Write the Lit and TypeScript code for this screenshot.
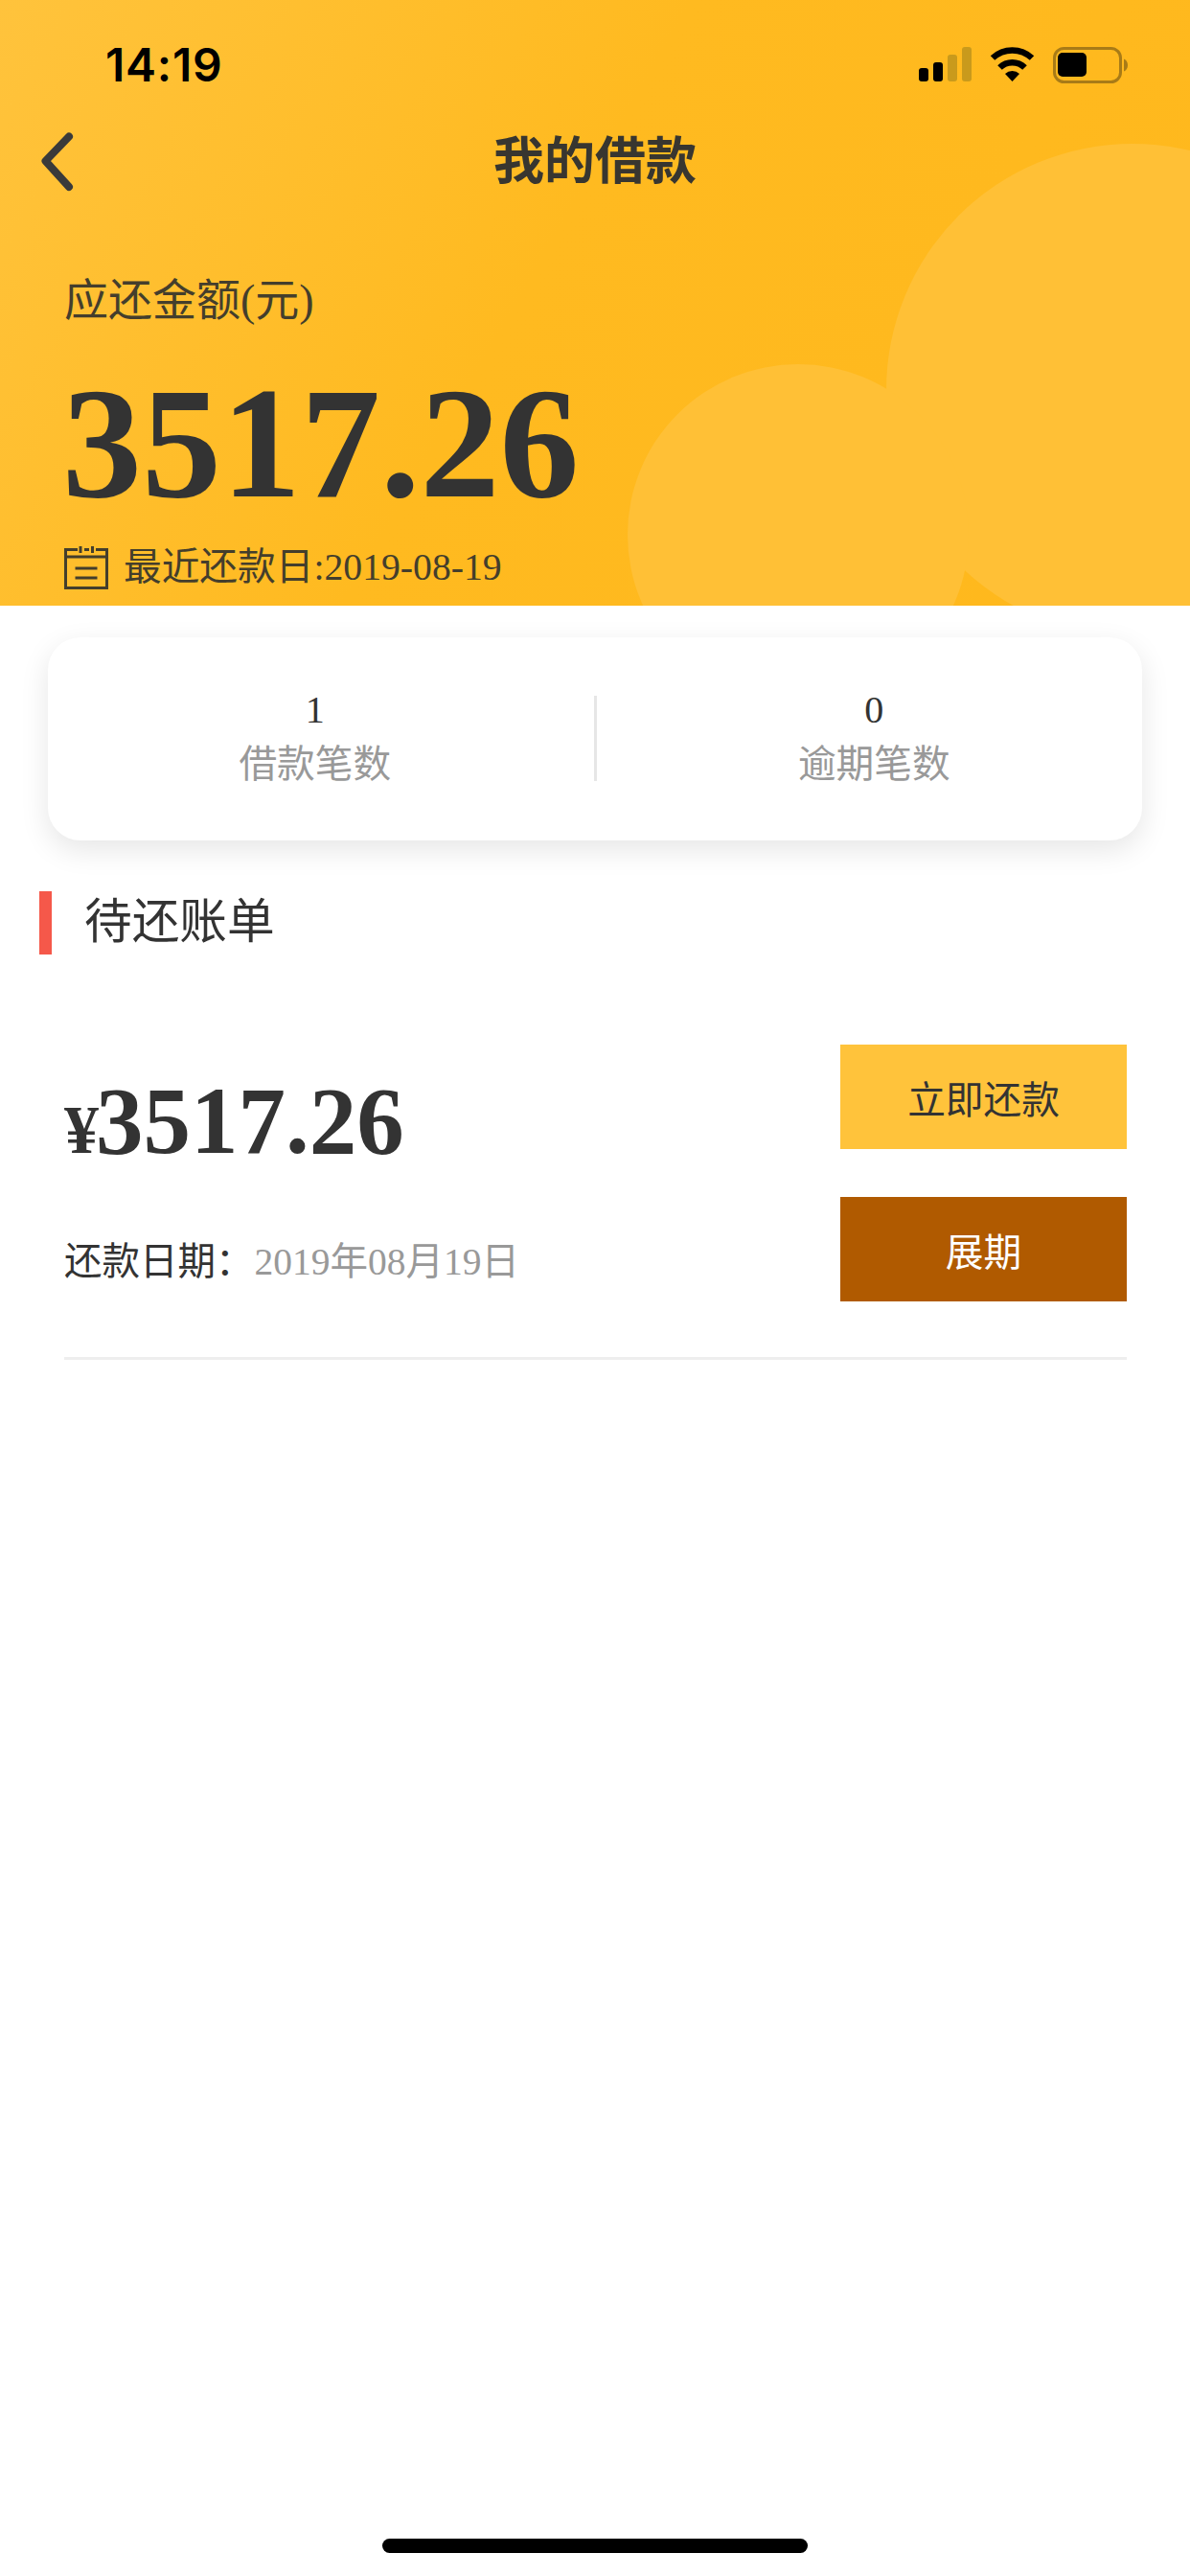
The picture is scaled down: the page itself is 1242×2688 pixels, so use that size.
import { LitElement, html, css } from "lit";
import { customElement } from "lit/decorators.js";

@customElement("app-root")
export class AppRoot extends LitElement {
  static styles = css`
    :host {
      display: flex;
      flex-direction: column;
      width: 1242px;
      min-height: 2688px;
      background: #fff;
      color: #333;
      font-family: "Liberation Serif", "Noto Sans CJK SC", serif;
    }
    .hero {
      position: relative;
      height: 632px;
      overflow: hidden;
      box-sizing: border-box;
      background: linear-gradient(120deg, #ffc33c 0%, #ffba20 45%, #ffb81c 100%);
    }
    .blobs {
      position: absolute;
      inset: 0;
    }
    .hero-content {
      position: relative;
      display: flex;
      flex-direction: column;
    }
    .status {
      height: 122px;
      display: flex;
      align-items: flex-start;
      justify-content: space-between;
      padding: 49px 65px 0 110px;
      box-sizing: border-box;
    }
    .time {
      font: 600 48px/37px Inter, "Liberation Sans", sans-serif;
      color: #000;
      letter-spacing: 0.8px;
    }
    .status-icons {
      display: flex;
      align-items: flex-start;
      gap: 19px;
    }
    .nav {
      height: 90px;
      padding-bottom: 6px;
      box-sizing: border-box;
      position: relative;
      display: flex;
      align-items: center;
      justify-content: center;
    }
    .back {
      position: absolute;
      left: 40px;
      top: 16px;
    }
    .title {
      font: 700 53px/80px "Noto Sans CJK SC", sans-serif;
      color: #383630;
    }
    .due-label {
      margin: 72px 0 0 67px;
      font-size: 46px;
      line-height: 60px;
      color: #443e2c;
    }
    .due-value {
      margin: 43px 0 0 65px;
      font-size: 166px;
      font-weight: 700;
      line-height: 150px;
      color: #333;
    }
    .due-date {
      display: flex;
      align-items: center;
      gap: 16px;
      margin: 31px 0 0 67px;
      font-size: 39.7px;
      line-height: 48px;
      color: #443e2c;
    }
    .card {
      margin: 33px 50px 0;
      height: 212px;
      box-sizing: border-box;
      padding-top: 61px;
      border-radius: 34px;
      background: #fff;
      box-shadow: 0 10px 30px rgba(0, 0, 0, 0.1);
      display: grid;
      grid-template-columns: 1fr 3px 1fr;
      align-items: start;
    }
    .stat {
      display: flex;
      flex-direction: column;
      align-items: center;
      margin-top: -5px;
    }
    .stat.first {
      padding-right: 12px;
    }
    .stat.second {
      padding-left: 10px;
    }
    .stat-num {
      font-size: 40px;
      line-height: 40px;
      color: #333;
    }
    .stat-label {
      margin-top: 9px;
      font-size: 39.7px;
      line-height: 56px;
      color: #999;
    }
    .stat-sep {
      height: 89px;
      background: #e6e6e6;
    }
    .section {
      margin: 53px 0 0 41px;
      display: flex;
      align-items: center;
      height: 66px;
    }
    .section-bar {
      width: 13px;
      height: 66px;
      background: #f5584a;
    }
    .section-title {
      margin-left: 34px;
      font-size: 49.7px;
      line-height: 60px;
      color: #333;
    }
    .bill {
      margin: 94px 66px 0 67px;
      padding-bottom: 58px;
      border-bottom: 3px solid #eeeeee;
      display: flex;
      justify-content: space-between;
    }
    .bill-left {
      display: flex;
      flex-direction: column;
    }
    .amount {
      margin-top: 25px;
      font-weight: 700;
      font-size: 99px;
      line-height: 110px;
      color: #333;
    }
    .amount .yen {
      font-size: 72px;
      letter-spacing: -3px;
    }
    .bill-date {
      margin-top: 55px;
      font-size: 39.5px;
      line-height: 56px;
      color: #333;
    }
    .bill-date .muted {
      margin-left: 1px;
      color: #999;
    }
    .actions {
      display: flex;
      flex-direction: column;
      gap: 50px;
    }
    .btn {
      width: 299px;
      height: 109px;
      display: flex;
      align-items: center;
      justify-content: center;
      font-size: 39.7px;
    }
    .btn.pay {
      background: #ffc33b;
      color: #333;
    }
    .btn.extend {
      background: #b05a00;
      color: #fff;
    }
    .home {
      margin: auto auto 24px;
      width: 444px;
      height: 15px;
      border-radius: 8px;
      background: #000;
    }
  `;

  render() {
    return html`
      <section class="hero">
        <svg class="blobs" width="1242" height="632" viewBox="0 0 1242 632">
          <g fill="#ffc036">
            <circle cx="1182" cy="407" r="257"></circle>
            <circle cx="833" cy="558" r="178"></circle>
          </g>
        </svg>
        <div class="hero-content">
          <div class="status">
            <span class="time">14:19</span>
            <div class="status-icons">
              <svg width="55" height="36" viewBox="0 0 55 36">
                <rect x="0" y="22" width="10" height="14" rx="3" fill="#000"></rect>
                <rect x="15" y="16" width="10" height="20" rx="3" fill="#000"></rect>
                <rect x="30" y="8" width="10" height="28" rx="3" fill="#c99a1c"></rect>
                <rect x="45" y="0" width="10" height="36" rx="3" fill="#c99a1c"></rect>
              </svg>
              <svg width="47" height="36" viewBox="0 0 47 36">
                <path d="M3 11.5A30 30 0 0 1 44 11.5" fill="none" stroke="#000" stroke-width="6.5"></path>
                <path d="M10.5 21.5A18.5 18.5 0 0 1 36.5 21.5" fill="none" stroke="#000" stroke-width="6.5"></path>
                <path d="M23.5 36L16 28A11 11 0 0 1 31 28Z" fill="#000"></path>
              </svg>
              <svg width="78" height="38" viewBox="0 0 78 38">
                <rect x="1.5" y="1.5" width="69" height="35" rx="10" fill="none" stroke="#a87b17" stroke-width="3"></rect>
                <rect x="5" y="6" width="30" height="25" rx="5" fill="#000"></rect>
                <path d="M74 12.5C76.5 13.5 78 16 78 19C78 22 76.5 24.5 74 25.5Z" fill="#a87b17"></path>
              </svg>
            </div>
          </div>
          <div class="nav">
            <svg class="back" width="40" height="64" viewBox="0 0 40 64">
              <path d="M32 4.5L7.5 30L32 57" fill="none" stroke="#3a3a3a" stroke-width="8" stroke-linecap="round" stroke-linejoin="round"></path>
            </svg>
            <span class="title">我的借款</span>
          </div>
          <div class="due-label">应还金额(元)</div>
          <div class="due-value">3517.26</div>
          <div class="due-date">
            <svg width="46" height="45" viewBox="0 0 46 45">
              <g fill="none" stroke="#443e2c" stroke-width="3">
                <path d="M14 3.5H1.5V43.5H44.5V3.5H33"></path>
                <path d="M21 3.5H26"></path>
                <path d="M1.5 11H44.5"></path>
                <path d="M17 0V7M29.5 0V7"></path>
                <path d="M11.5 23H34.5M11.5 33H34.5"></path>
              </g>
            </svg>
            <span>最近还款日:2019-08-19</span>
          </div>
        </div>
      </section>

      <div class="card">
        <div class="stat first">
          <span class="stat-num">1</span>
          <span class="stat-label">借款笔数</span>
        </div>
        <div class="stat-sep"></div>
        <div class="stat second">
          <span class="stat-num">0</span>
          <span class="stat-label">逾期笔数</span>
        </div>
      </div>

      <div class="section">
        <div class="section-bar"></div>
        <span class="section-title">待还账单</span>
      </div>

      <div class="bill">
        <div class="bill-left">
          <div class="amount"><span class="yen">¥</span>3517.26</div>
          <div class="bill-date">还款日期：<span class="muted">2019年08月19日</span></div>
        </div>
        <div class="actions">
          <div class="btn pay">立即还款</div>
          <div class="btn extend">展期</div>
        </div>
      </div>

      <div class="home"></div>
    `;
  }
}
